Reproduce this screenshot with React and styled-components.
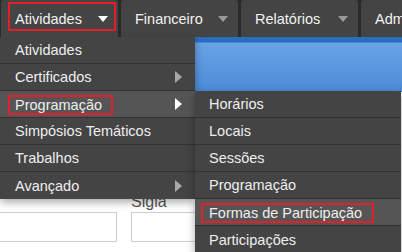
import React from "react";
import styled, { createGlobalStyle } from "styled-components";

const GlobalStyle = createGlobalStyle`
    html, body {
        margin: 0;
        padding: 0;
        background: #ffffff;
    }
    body {
        font-family: "Liberation Sans", Arial, sans-serif;
    }
`;

const Screen = styled.div`
    position: relative;
    width: 402px;
    height: 252px;
    overflow: hidden;
    background: #ffffff;
`;

const NavBar = styled.nav`
    display: flex;
    gap: 3px;
    height: 37px;
    padding-left: 1px;
    background: #2a2a2a;
    box-sizing: border-box;
`;

const NavTab = styled.div`
    position: relative;
    flex: 0 0 117px;
    display: flex;
    align-items: center;
    justify-content: space-between;
    padding: 0 10px 0 14px;
    box-sizing: border-box;
    background: #444444;
    border-radius: 3px 3px 0 0;
    color: #f2f2f2;
    font-size: 14.5px;
    white-space: nowrap;
    ${(props) => (props.$open ? `z-index: 3;` : "")}
`;

const Caret = styled.span`
    width: 0;
    height: 0;
    border-left: 5.5px solid transparent;
    border-right: 5.5px solid transparent;
    border-top: 6px solid ${(props) => (props.$active ? "#ffffff" : "#9a9a9a")};
`;

const TabMark = styled.span`
    position: absolute;
    top: 2px;
    left: 7px;
    right: 2px;
    bottom: 6px;
    border: 2px solid #e3202a;
    pointer-events: none;
`;

const Header = styled.div`
    height: 55px;
    background: linear-gradient(
        to bottom,
        #2b6bc1 0,
        #2b6bc1 5px,
        #68a3e4 6px,
        #4c8bd9 100%
    );
`;

const Body = styled.div`
    padding: 101px 0 0 0;
    background: #ffffff;
`;

const FieldRow = styled.div`
    display: flex;
    align-items: flex-end;
    gap: 14px;
    margin-left: -2px;
`;

const Field = styled.div`
    display: flex;
    flex-direction: column;
    width: ${(props) => props.width};
`;

const Label = styled.label`
    font-size: 16px;
    line-height: 18px;
    color: #555555;
    margin-bottom: 1px;
`;

const Input = styled.div`
    height: 30px;
    border: 1px solid #cccccc;
    box-sizing: border-box;
    background: #ffffff;
`;

const Menu = styled.ul`
    position: absolute;
    top: 37px;
    left: ${(props) => props.left || "0"};
    width: ${(props) => props.width};
    margin: 0;
    padding: 0;
    list-style: none;
    background: #444444;
    box-shadow: 0 3px 8px rgba(0, 0, 0, 0.35);
    z-index: 2;
`;

const SubMenu = styled(Menu)`
    top: 0;
    left: 100%;
`;

const Item = styled.li`
    position: relative;
    display: flex;
    align-items: stretch;
    height: 27px;
    padding: 0 13px 0 ${(props) => props.$indent || "15px"};
    box-sizing: border-box;
    border-bottom: 1px solid #323232;
    background: ${(props) => (props.$hover ? "#555555" : "#444444")};
    color: #eeeeee;
    font-size: 14.5px;
    white-space: nowrap;
    &:last-child {
        border-bottom: none;
    }
`;

const ItemText = styled.span`
    display: flex;
    align-items: center;
    flex: 1;
`;

const Mark = styled.span`
    display: flex;
    align-items: center;
    margin: 1px 0 -1px -${(props) => props.$pl + 2}px;
    padding: 0 ${(props) => props.$pr}px 0 ${(props) => props.$pl}px;
    border: 2px solid #e3202a;
    box-sizing: border-box;
`;

const Arrow = styled.span`
    align-self: center;
    width: 0;
    height: 0;
    border-top: 6px solid transparent;
    border-bottom: 6px solid transparent;
    border-left: 7px solid ${(props) => (props.$active ? "#ffffff" : "#a8a8a8")};
`;

const tabs = ["Atividades", "Financeiro", "Relatórios", "Administração"];

const subItems = [
    "Horários",
    "Locais",
    "Sessões",
    "Programação",
    "Formas de Participação",
    "Participações",
];

const App = () => {
    return (
        <>
            <GlobalStyle />
            <Screen>
                <NavBar>
                    {tabs.map((t, i) => (
                        <NavTab key={t} $open={i === 0}>
                            <span>{t}</span>
                            <Caret $active={i === 0} />
                            {i === 0 && <TabMark />}
                        </NavTab>
                    ))}
                </NavBar>
                <Header />
                <Body>
                    <FieldRow>
                        <Field width="119px">
                            <Input />
                        </Field>
                        <Field width="240px">
                            <Label>Sigla</Label>
                            <Input />
                        </Field>
                    </FieldRow>
                </Body>

                <Menu width="195px">
                    <Item>
                        <ItemText>Atividades</ItemText>
                    </Item>
                    <Item>
                        <ItemText>Certificados</ItemText>
                        <Arrow />
                    </Item>
                    <Item $hover>
                        <ItemText>
                            <Mark $pl={5} $pr={9}>Programação</Mark>
                        </ItemText>
                        <Arrow $active />
                        <SubMenu width="206px">
                            {subItems.map((s) => (
                                <Item key={s} $indent="14px" $hover={s === "Formas de Participação"}>
                                    <ItemText>
                                        {s === "Formas de Participação" ? (
                                            <Mark $pl={6} $pr={10}>{s}</Mark>
                                        ) : (
                                            s
                                        )}
                                    </ItemText>
                                </Item>
                            ))}
                        </SubMenu>
                    </Item>
                    <Item>
                        <ItemText>Simpósios Temáticos</ItemText>
                    </Item>
                    <Item>
                        <ItemText>Trabalhos</ItemText>
                    </Item>
                    <Item>
                        <ItemText>Avançado</ItemText>
                        <Arrow />
                    </Item>
                </Menu>
            </Screen>
        </>
    );
};

export default App;
